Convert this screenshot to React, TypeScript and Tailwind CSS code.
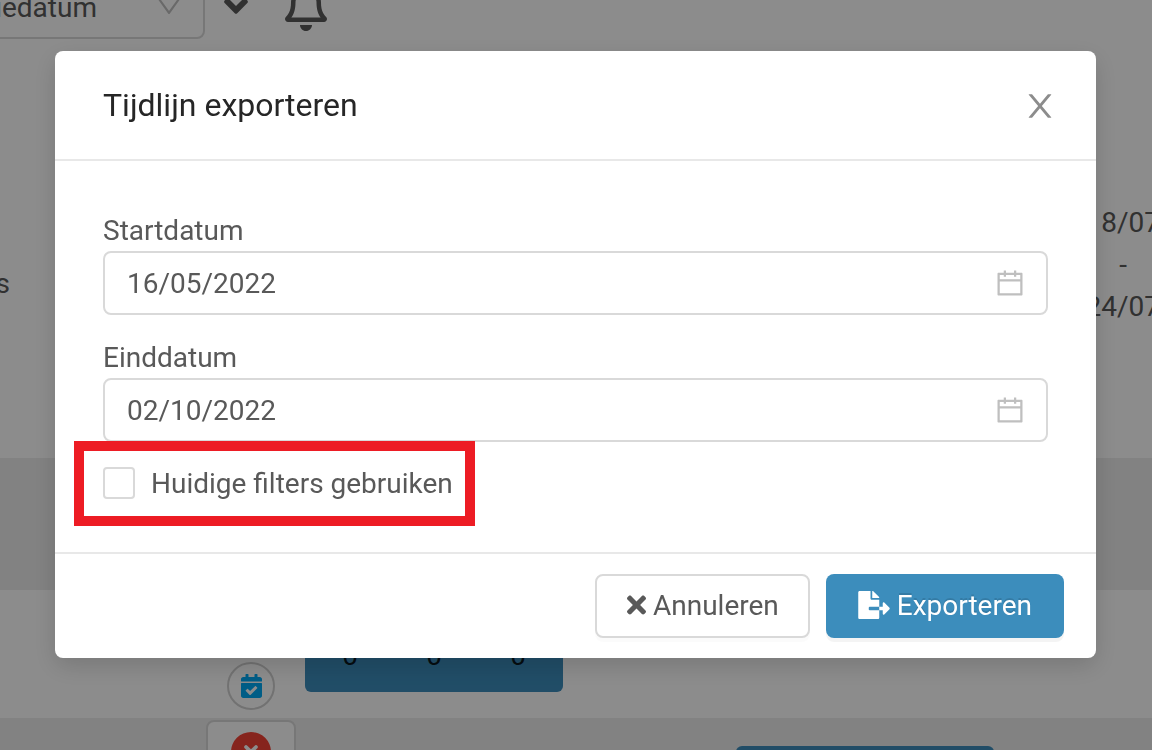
import React, { useState } from 'react';
import { AiOutlineCalendar, AiOutlineDown } from 'react-icons/ai';
import { FaAngleDown, FaCalendarCheck, FaFileExport, FaRegBell, FaTimes } from 'react-icons/fa';
import { FaCircleXmark } from 'react-icons/fa6';

interface DateFieldProps {
  id: string;
  label: string;
  value: string;
  onChange: (value: string) => void;
}

const CloseIcon: React.FC = () => (
  <svg viewBox="64 64 896 896" className="size-8" fill="currentColor" aria-hidden="true">
    <path d="M563.8 512l262.5-312.9c4.4-5.2.7-13.1-6.1-13.1h-79.8c-4.7 0-9.2 2.1-12.3 5.7L511.6 449.8 295.1 191.7c-3-3.6-7.5-5.7-12.3-5.7H203c-6.8 0-10.5 7.9-6.1 13.1L459.4 512 196.9 824.9A7.95 7.95 0 0 0 203 838h79.8c4.7 0 9.2-2.1 12.3-5.7l216.5-258.1 216.5 258.1c3 3.6 7.5 5.7 12.3 5.7h79.8c6.8 0 10.5-7.9 6.1-13.1L563.8 512z" />
  </svg>
);

const DateField: React.FC<DateFieldProps> = ({ id, label, value, onChange }) => (
  <div>
    <label htmlFor={id} className="block leading-10">{label}</label>
    <div className="flex h-16 items-center rounded-lg border-2 border-[#d9d9d9] bg-white pl-[22px] pr-5">
      <input
        id={id}
        type="text"
        className="min-w-0 flex-1 bg-transparent pt-0.5 outline-none"
        value={value}
        onChange={(e) => onChange(e.target.value)}
      />
      <AiOutlineCalendar className="size-8 shrink-0 text-[#bfbfbf]" />
    </div>
  </div>
);

const Timeline: React.FC = () => (
  <div className="flex h-screen flex-col overflow-hidden bg-white">
    <header className="-mt-[25px] flex h-16 shrink-0 items-start">
      <div className="relative -ml-[100px] w-[305px] shrink-0">
        <select
          aria-label="Sorteren"
          className="h-16 w-full appearance-none rounded-lg border-2 border-[#d9d9d9] bg-white pr-[106px] pt-0.5 [text-align-last:right]"
        >
          <option>Creatiedatum</option>
        </select>
        <AiOutlineDown className="pointer-events-none absolute right-[22px] top-[18px] size-7 text-[#bfbfbf]" />
      </div>
      <button type="button" aria-label="Meer" className="ml-[19px] mt-3">
        <FaAngleDown className="h-[38px] w-6" />
      </button>
      <button type="button" aria-label="Meldingen" className="ml-[37px] mt-2">
        <FaRegBell className="h-12 w-[42px]" />
      </button>
    </header>

    <div className="flex h-[419px] shrink-0 justify-between">
      <div className="mt-[224px] flex w-2.5 justify-end leading-[42px]">s</div>
      <div className="mt-[163px] -mr-2 flex w-[74px] flex-col items-end leading-[42px]">
        <div>8/07</div>
        <div className="self-center">-</div>
        <div>24/07</div>
      </div>
    </div>

    <div className="h-[132px] shrink-0 bg-[#ededed]" />

    <div className="flex h-32 shrink-0 items-end">
      <div className="mb-2 ml-[227px] flex size-12 items-center justify-center rounded-full border-2 border-[#d0d0d0]">
        <FaCalendarCheck className="h-6 w-[21px] text-[#00a9f4]" />
      </div>
      <div className="mb-[26px] ml-[30px] grid h-16 w-[258px] grid-cols-3 rounded-md bg-[#3c8dbc] px-[3px] text-center leading-[56px] text-black/85">
        <span>0</span>
        <span>0</span>
        <span>0</span>
      </div>
    </div>

    <div className="flex flex-1 items-start bg-[#ededed]">
      <div className="ml-[206px] mt-0.5 flex h-16 w-[90px] shrink-0 items-start justify-center rounded-lg border-2 border-[#d9d9d9] bg-white pt-2.5">
        <FaCircleXmark className="size-10 text-[#f44336]" />
      </div>
      <div className="ml-[440px] mt-7 h-16 w-[258px] rounded-md bg-[#3c8dbc]" />
    </div>
  </div>
);

export default function App() {
  const [startDate, setStartDate] = useState('16/05/2022');
  const [endDate, setEndDate] = useState('02/10/2022');
  const [useFilters, setUseFilters] = useState(false);

  return (
    <div className="font-[Roboto,sans-serif] text-[28px] leading-[42px] text-[#595959]">
      <Timeline />

      <div className="fixed inset-0 bg-black/45 pl-[55px] pr-14 pt-[51px]">
        <div
          role="dialog"
          aria-labelledby="export-title"
          className="rounded-lg bg-white shadow-[0_8px_24px_rgba(0,0,0,0.15)]"
        >
          <div className="flex items-center justify-between border-b-2 border-[#e8e8e8] py-8 pl-12 pr-10">
            <h2 id="export-title" className="text-[32px] leading-[44px] text-[#262626]">Tijdlijn exporteren</h2>
            <button type="button" aria-label="Sluiten" className="pt-0.5 text-[#8c8c8c]">
              <CloseIcon />
            </button>
          </div>

          <form className="flex flex-col gap-[23px] px-12 pb-[51px] pt-[50px]">
            <DateField id="start" label="Startdatum" value={startDate} onChange={setStartDate} />
            <DateField id="end" label="Einddatum" value={endDate} onChange={setEndDate} />

            <label className="relative flex h-9 w-fit items-center gap-4">
              <input
                type="checkbox"
                className="size-8 appearance-none rounded border-2 border-[#d9d9d9] bg-white checked:bg-[#3c8dbc]"
                checked={useFilters}
                onChange={(e) => setUseFilters(e.target.checked)}
              />
              <span className="pt-0.5 leading-8">Huidige filters gebruiken</span>
              <span className="pointer-events-none absolute -bottom-[25px] -left-[29px] -right-[22px] -top-6 border-10 border-[#ed1c24]" />
            </label>
          </form>

          <div className="flex justify-end gap-4 border-t-2 border-[#e8e8e8] px-8 py-5">
            <button
              type="button"
              className="flex h-16 items-center gap-[7px] rounded-lg border-2 border-[#d9d9d9] bg-white pl-[30px] pr-[29px] shadow-[0_4px_0_rgba(0,0,0,0.016)]"
            >
              <FaTimes className="mb-0.5 h-7 w-[19px]" />
              Annuleren
            </button>
            <button
              type="button"
              className="flex h-16 items-center gap-[7px] rounded-lg bg-[#3c8dbc] px-8 text-white shadow-[0_4px_0_rgba(0,0,0,0.045)] [text-shadow:0_-2px_0_rgba(0,0,0,0.12)]"
            >
              <FaFileExport className="mb-0.5 h-7 w-8" />
              Exporteren
            </button>
          </div>
        </div>
      </div>
    </div>
  );
}
